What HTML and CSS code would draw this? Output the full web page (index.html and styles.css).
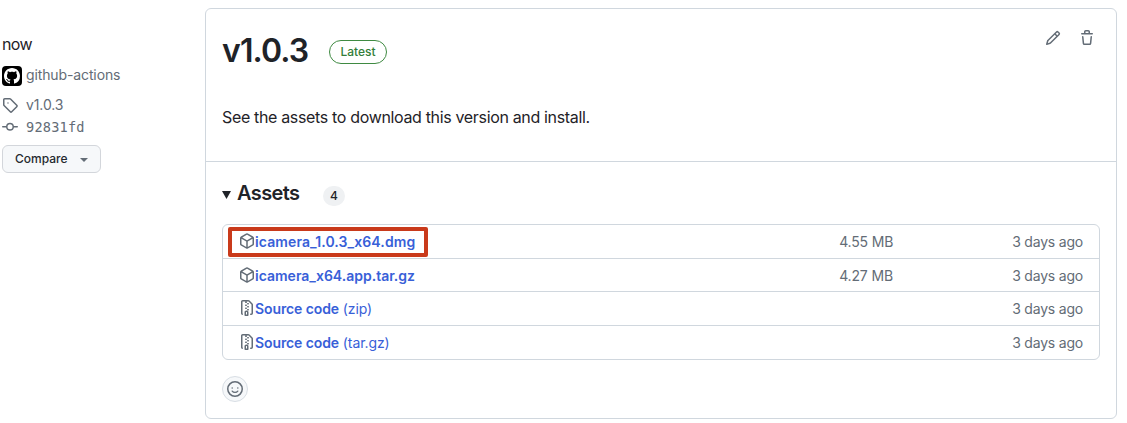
FILE: index.html
```html
<!DOCTYPE html>
<html lang="en">
<head>
<meta charset="utf-8">
<title>Release v1.0.3</title>
<link rel="stylesheet" href="styles.css">
</head>
<body>
<svg class="sprite" aria-hidden="true">
  <symbol id="package" viewBox="0 0 16 16"><path d="m8.878.392 5.25 3.045c.54.314.872.89.872 1.514v6.098a1.75 1.75 0 0 1-.872 1.514l-5.25 3.045a1.75 1.75 0 0 1-1.756 0l-5.25-3.045A1.75 1.75 0 0 1 1 11.049V4.951c0-.624.332-1.201.872-1.514L7.122.392a1.75 1.75 0 0 1 1.756 0ZM7.875 1.69l-4.63 2.685L8 7.133l4.755-2.758-4.63-2.685a.248.248 0 0 0-.25 0ZM2.5 5.677v5.372c0 .09.047.171.125.216l4.625 2.683V8.432Zm6.25 8.271 4.625-2.683a.25.25 0 0 0 .125-.216V5.677L8.75 8.432Z"/></symbol>
  <symbol id="zip" viewBox="0 0 16 16"><path d="M3.5 1.75v11.5c0 .09.048.173.126.217a.75.75 0 0 1-.752 1.298A1.748 1.748 0 0 1 2 13.25V1.75C2 .784 2.784 0 3.75 0h5.586c.464 0 .909.185 1.237.513l2.914 2.914c.329.328.513.773.513 1.237v8.586A1.75 1.75 0 0 1 12.25 15h-.5a.75.75 0 0 1 0-1.5h.5a.25.25 0 0 0 .25-.25V4.664a.25.25 0 0 0-.073-.177L9.513 1.573a.25.25 0 0 0-.177-.073H7.25a.75.75 0 0 1 0 1.5h-.5a.75.75 0 0 1 0-1.5h-3a.25.25 0 0 0-.25.25Zm3.75 8.75h.5c.966 0 1.75.784 1.75 1.75v3a.75.75 0 0 1-.75.75h-2.5a.75.75 0 0 1-.75-.75v-3c0-.966.784-1.75 1.75-1.75ZM6 5.25a.75.75 0 0 1 .75-.75h.5a.75.75 0 0 1 0 1.5h-.5A.75.75 0 0 1 6 5.25Zm.75 2.25h.5a.75.75 0 0 1 0 1.5h-.5a.75.75 0 0 1 0-1.5ZM8 6.75A.75.75 0 0 1 8.75 6h.5a.75.75 0 0 1 0 1.5h-.5A.75.75 0 0 1 8 6.75ZM8.75 3h.5a.75.75 0 0 1 0 1.5h-.5a.75.75 0 0 1 0-1.5ZM8 9.75A.75.75 0 0 1 8.75 9h.5a.75.75 0 0 1 0 1.5h-.5A.75.75 0 0 1 8 9.75Zm-1 2.5v2.25h1v-2.25a.25.25 0 0 0-.25-.25h-.5a.25.25 0 0 0-.25.25Z"/></symbol>
</svg>
<div class="page">
  <aside class="meta">
    <div class="when"><span>now</span></div>
    <div class="meta-row author">
      <span class="avatar"><svg viewBox="0 0 16 16"><path d="M8 0C3.58 0 0 3.58 0 8c0 3.54 2.29 6.53 5.47 7.59.4.07.55-.17.55-.38 0-.19-.01-.82-.01-1.49-2.01.37-2.53-.49-2.69-.94-.09-.23-.48-.94-.82-1.13-.28-.15-.68-.52-.01-.53.63-.01 1.08.58 1.23.82.72 1.21 1.87.87 2.33.66.07-.52.28-.87.51-1.07-1.78-.2-3.64-.89-3.64-3.95 0-.87.31-1.59.82-2.15-.08-.2-.36-1.02.08-2.12 0 0 .67-.21 2.2.82.64-.18 1.32-.27 2-.27s1.36.09 2 .27c1.53-1.04 2.2-.82 2.2-.82.44 1.1.16 1.92.08 2.12.51.56.82 1.27.82 2.15 0 3.07-1.87 3.75-3.65 3.95.29.25.54.73.54 1.48 0 1.07-.01 1.93-.01 2.2 0 .21.15.46.55.38A8.01 8.01 0 0 0 16 8c0-4.42-3.58-8-8-8Z"/></svg></span>
      <span class="author-name">github-actions</span>
    </div>
    <div class="meta-row tag">
      <svg class="icon" viewBox="0 0 16 16"><path d="M1 7.775V2.75C1 1.784 1.784 1 2.75 1h5.025c.464 0 .91.184 1.238.513l6.25 6.25a1.75 1.75 0 0 1 0 2.474l-5.026 5.026a1.75 1.75 0 0 1-2.474 0l-6.25-6.25A1.752 1.752 0 0 1 1 7.775Zm1.5 0c0 .066.026.13.073.177l6.25 6.25a.25.25 0 0 0 .354 0l5.025-5.025a.25.25 0 0 0 0-.354l-6.25-6.25a.25.25 0 0 0-.177-.073H2.75a.25.25 0 0 0-.25.25ZM6 5.3a.7.7 0 1 1 0 1.4.7.7 0 0 1 0-1.4Z"/></svg>
      <span class="tag-name">v1.0.3</span>
    </div>
    <div class="meta-row commit">
      <svg class="icon" viewBox="0 0 16 16"><path d="M11.93 8.5a4.002 4.002 0 0 1-7.86 0H.75a.75.75 0 0 1 0-1.5h3.32a4.002 4.002 0 0 1 7.86 0h3.32a.75.75 0 0 1 0 1.5Zm-1.43-.75a2.5 2.5 0 1 0-5 0 2.5 2.5 0 0 0 5 0Z"/></svg>
      <span class="hash">92831fd</span>
    </div>
    <button class="compare"><span>Compare</span><i class="caret"></i></button>
  </aside>
  <main class="card">
    <section class="release">
      <header class="release-head">
        <h1><span>v1.0.3</span></h1>
        <span class="latest"><span>Latest</span></span>
        <div class="actions">
          <svg class="icon" viewBox="0 0 16 16"><path d="M11.013 1.427a1.75 1.75 0 0 1 2.474 0l1.086 1.086a1.75 1.75 0 0 1 0 2.474l-8.61 8.61c-.21.21-.47.364-.756.445l-3.251.93a.75.75 0 0 1-.927-.928l.929-3.25c.081-.286.235-.547.445-.758l8.61-8.61Zm.176 4.823L9.75 4.81l-6.286 6.287a.253.253 0 0 0-.064.108l-.558 1.953 1.953-.558a.253.253 0 0 0 .108-.064Zm1.238-3.763a.25.25 0 0 0-.354 0L10.811 3.75l1.439 1.44 1.263-1.263a.25.25 0 0 0 0-.354Z"/></svg>
          <svg class="icon" viewBox="0 0 16 16"><path d="M11 1.75V3h2.25a.75.75 0 0 1 0 1.5H2.75a.75.75 0 0 1 0-1.5H5V1.75C5 .784 5.784 0 6.75 0h2.5C10.216 0 11 .784 11 1.75ZM4.496 6.675l.66 6.6a.25.25 0 0 0 .249.225h5.19a.25.25 0 0 0 .249-.225l.66-6.6a.75.75 0 0 1 1.492.149l-.66 6.6A1.748 1.748 0 0 1 10.595 15h-5.19a1.75 1.75 0 0 1-1.741-1.575l-.66-6.6a.75.75 0 1 1 1.492-.15ZM6.5 1.75V3h3V1.75a.25.25 0 0 0-.25-.25h-2.5a.25.25 0 0 0-.25.25Z"/></svg>
        </div>
      </header>
      <p class="notes"><span>See the assets to download this version and install.</span></p>
    </section>
    <section class="assets">
      <div class="assets-head"><i class="disclosure"></i><h2>Assets</h2><span class="count">4</span></div>
      <ul class="asset-list">
        <li class="asset"><span class="highlight"></span><svg class="icon"><use href="#package"/></svg><a class="name"><b class="dmg">icamera_1.0.3_x64.dmg</b></a><span class="size">4.55 MB</span><span class="date">3 days ago</span></li>
        <li class="asset"><svg class="icon"><use href="#package"/></svg><a class="name"><b class="targz">icamera_x64.app.tar.gz</b></a><span class="size">4.27 MB</span><span class="date">3 days ago</span></li>
        <li class="asset"><svg class="icon"><use href="#zip"/></svg><a class="name source"><b>Source code</b> <span>(zip)</span></a><span class="size"></span><span class="date">3 days ago</span></li>
        <li class="asset"><svg class="icon"><use href="#zip"/></svg><a class="name source"><b>Source code</b> <span>(tar.gz)</span></a><span class="size"></span><span class="date">3 days ago</span></li>
      </ul>
      <button class="react"><svg class="icon" viewBox="0 0 16 16"><path d="M8 0a8 8 0 1 1 0 16A8 8 0 0 1 8 0ZM1.5 8a6.5 6.5 0 1 0 13 0 6.5 6.5 0 0 0-13 0Z"/><path class="smile" d="M5.2 10.1c.6.8 1.5 1.3 2.8 1.3s2.2-.5 2.8-1.3"/><circle cx="5.2" cy="7" r=".75"/><circle cx="10.8" cy="7" r=".75"/></svg></button>
    </section>
  </main>
</div>
</body>
</html>
```

FILE: styles.css
```css
* { box-sizing: border-box; }
body { margin: 0; background: #fff; color: #1f2328; font: 14px/20px Inter, "Liberation Sans", sans-serif; overflow: hidden; }
h1, h2, p, ul { margin: 0; padding: 0; }
button { font: inherit; color: inherit; padding: 0; }
.sprite { display: none; }
.icon { width: 16px; height: 16px; flex: none; fill: #636c76; display: block; }
.page { display: flex; height: 423px; padding-top: 8px; }
.meta { width: 205px; padding: 26px 0 0 2px; color: #636c76; }
.when { font-size: 16px; line-height: 20px; color: #1f2328; letter-spacing: -0.6px; }
.meta-row { display: flex; align-items: center; height: 22px; }
.meta-row .icon { margin-right: 8px; }
.author { margin-top: 11px; }
.author-name { letter-spacing: -0.12px; margin-top: -2px; }
.tag-name { letter-spacing: -0.1px; }
.avatar { width: 20px; height: 20px; border-radius: 4px; background: #000; display: grid; place-items: center; margin-right: 4px; }
.avatar svg { width: 16px; height: 16px; fill: #fff; display: block; }
.tag { margin-top: 7px; }
.hash { font: 13.6px/20px "DejaVu Sans Mono", monospace; letter-spacing: 0.2px; }
.compare { display: flex; align-items: center; width: 99px; height: 28px; margin-top: 7px; padding: 0 12px; border: 1px solid #d3d6db; border-radius: 6px; background: #f6f8fa; color: #24292f; font-size: 12px; font-weight: 500; }
.caret { margin: 2px 0 0 12px; border: 4px solid transparent; border-top-color: #636c76; border-bottom: 0; }
.card { width: 912px; height: 411px; border: 1px solid #d0d7de; border-radius: 6px; }
.release { height: 153px; padding: 16px; border-bottom: 1px solid #d0d7de; }
.release-head { display: flex; align-items: center; height: 52px; }
h1 { font-size: 32px; line-height: 40px; font-weight: 600; letter-spacing: -0.9px; width: 107px; }
.latest { height: 24px; width: 58px; margin-top: 2px; border: 1px solid #3f8a42; border-radius: 12px; color: #347d39; font-size: 12px; line-height: 22px; font-weight: 500; text-align: center; }
.actions { display: flex; gap: 18px; margin: -26px 5px 0 auto; }
.notes { margin-top: 28px; font-size: 16px; line-height: 24px; letter-spacing: -0.34px; }
.assets { padding: 19px 16px 0; }
.assets-head { display: flex; align-items: center; height: 24px; }
.disclosure { width: 9px; height: 8px; background: #1f2328; clip-path: polygon(0 0, 100% 0, 50% 100%); margin: 4px 6px 0 0; }
h2 { font-size: 20px; line-height: 24px; font-weight: 600; width: 86px; letter-spacing: -0.6px; }
.count { width: 22px; height: 20px; margin-top: 5px; border-radius: 10px; background: #eff1f3; font-size: 12px; font-weight: 500; text-align: center; }
.asset-list { list-style: none; height: 136px; margin-top: 19px; border: 1px solid #d0d7de; border-radius: 6px; }
.asset { position: relative; display: flex; align-items: center; height: 33px; padding: 1px 16px 0; color: #636c76; }
.asset:nth-child(n+3) { height: 34px; padding-top: 0; }
.asset .icon { margin-top: -2px; }
.asset + .asset { border-top: 1px solid #d0d7de; }
.name { color: #3860d8; flex: 1; }
.name b { font-weight: 600; }
.dmg { letter-spacing: 0.1px; }
.source { letter-spacing: -0.1px; }
.size { width: 173px; letter-spacing: -0.15px; }
.date { letter-spacing: -0.2px; }
.highlight { position: absolute; left: 5px; top: 2px; width: 200px; height: 30px; border: 4px solid #c93a1b; border-radius: 2px; }
.react { display: grid; place-items: center; width: 26px; height: 26px; margin-top: 16px; border: 1px solid #d8dee4; border-radius: 50%; background: #f6f8fa; }
.smile { fill: none; stroke: #636c76; stroke-width: 1.3; stroke-linecap: round; }
```
